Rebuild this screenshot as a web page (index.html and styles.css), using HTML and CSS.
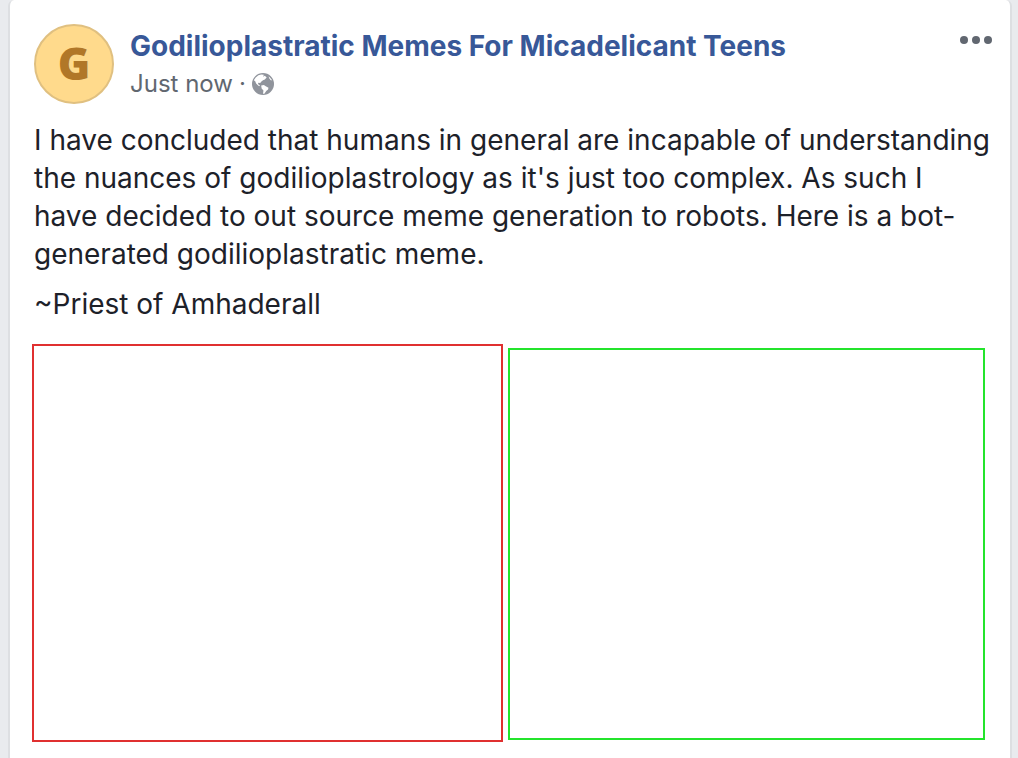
FILE: index.html
```html
<!DOCTYPE html>
<html lang="en">
<head>
    <meta charset="UTF-8">
    <meta name="viewport" content="width=device-width, initial-scale=1.0">
    <title>Godilioplastratic Memes For Micadelicant Teens</title>
    <link rel="stylesheet" href="styles.css">
</head>
<body>
    <article class="post">
        <header class="post-header">
            <div class="avatar">G</div>
            <div class="post-info">
                <h1><a class="page-name" href="#">Godilioplastratic Memes For Micadelicant Teens</a></h1>
                <div class="post-meta">
                    <a class="post-time" href="#">Just now</a>
                    <span class="dot">·</span>
                    <svg class="globe" viewBox="0 0 24 24" role="img" aria-label="Public">
                        <circle cx="12" cy="12" r="12" fill="#90949c"/>
                        <path d="M2 8 L4 5 L7 2.5 L10 1.5 L13 2 L12 4 L14 3 L16 5 L14 7 L12 8 L10 9.5 L9 11 L7 10.5 L6.5 12 L8 13 L9 14.5 L7 14 L4.5 11.5 L3.5 9 Z" fill="#fff"/>
                        <path d="M10 13.5 L13 13 L15 14.5 L18 16 L17.5 18 L15.5 19.5 L13.5 22.5 L12 22.5 L12.5 19 L10.5 17 Z" fill="#fff"/>
                        <path d="M18 3.5 L20 5.5 L22 8 L20.5 8 L19 6 Z" fill="#fff"/>
                    </svg>
                </div>
            </div>
            <button class="menu-btn" type="button" aria-label="Post options">
                <svg viewBox="0 0 32 8">
                    <circle cx="4" cy="4" r="4"/>
                    <circle cx="16" cy="4" r="4"/>
                    <circle cx="28" cy="4" r="4"/>
                </svg>
            </button>
        </header>

        <div class="post-text">
            <p>I have concluded that humans in general are incapable of understanding the nuances of godilioplastrology as it's just too complex. As such I have decided to out source meme generation to robots. Here is a bot-generated godilioplastratic meme.</p>
            <p>~Priest of Amhaderall</p>
        </div>

        <div class="post-media">
            <div class="frame frame-red"></div>
            <div class="frame frame-green"></div>
        </div>
    </article>
</body>
</html>
```
FILE: styles.css
```css
* {
    margin: 0;
    padding: 0;
    box-sizing: border-box;
}

body {
    background: #e9ebee;
    font-family: Inter, 'Liberation Sans', sans-serif;
    color: #1d2129;
    padding: 0 6px 0 8px;
}

.post {
    min-height: 100vh;
    background: #fff;
    border: 2px solid #dddfe2;
    border-top: none;
    border-bottom: none;
    border-radius: 6px 6px 0 0;
    padding: 24px 18px 16px 24px;
}

.post-header {
    display: flex;
    gap: 16px;
}

.avatar {
    width: 80px;
    height: 80px;
    border: 2px solid #e0c080;
    border-radius: 50%;
    background: #ffda8c;
    color: #b17728;
    font-family: 'Open Sans', sans-serif;
    font-size: 44px;
    font-weight: 800;
    line-height: 74px;
    text-align: center;
}

.post-info {
    flex: 1;
    padding-top: 4px;
}

.post-info h1 {
    font-size: 28px;
    line-height: 36px;
    font-weight: 700;
}

a {
    color: #385898;
    text-decoration: none;
}

.post-meta {
    display: flex;
    align-items: center;
    gap: 6px;
    font-size: 24px;
    line-height: 40px;
    color: #616770;
}

.post-meta .post-time {
    color: #616770;
}

.globe {
    width: 22px;
    height: 22px;
}

.menu-btn {
    align-self: flex-start;
    margin-top: 12px;
    background: none;
    border: none;
    cursor: pointer;
}

.menu-btn svg {
    display: block;
    width: 32px;
    height: 8px;
    fill: #616770;
}

.post-text {
    margin-top: 17px;
    font-size: 28px;
    line-height: 38px;
}

.post-text p + p {
    margin-top: 12px;
}

.post-media {
    display: flex;
    gap: 5px;
    margin: 21px 7px 0 -2px;
}

.frame-red {
    flex: 471;
    height: 398px;
    border: 2px solid #e03030;
}

.frame-green {
    flex: 477;
    height: 392px;
    margin-top: 4px;
    border: 2px solid #24e42c;
}
```
